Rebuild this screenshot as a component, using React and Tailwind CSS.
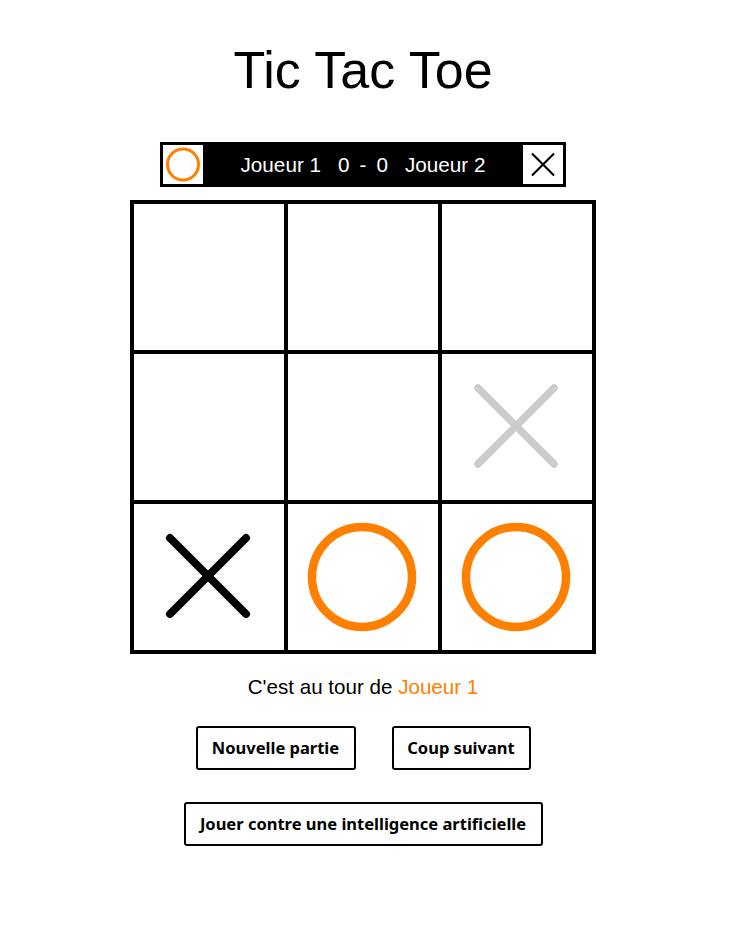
import { useState } from 'react';

const ORANGE = '#ff7f00';

const board = [
  [null, null, null],
  [null, null, 'ghost'],
  ['X', 'O', 'O'],
];

const Cross = ({ color, width = 8 }) => (
  <svg width="150" height="146" viewBox="0 0 150 146">
    <line x1="36" y1="34" x2="112" y2="110" stroke={color} strokeWidth={width} strokeLinecap="round" />
    <line x1="112" y1="34" x2="36" y2="110" stroke={color} strokeWidth={width} strokeLinecap="round" />
  </svg>
);

const Ring = () => (
  <svg width="150" height="146" viewBox="0 0 150 146">
    <circle cx="74" cy="73" r="50" fill="none" stroke={ORANGE} strokeWidth="8.5" />
  </svg>
);

const Cell = ({ value }) => (
  <div className="flex items-center justify-center bg-white">
    {value === 'X' && <Cross color="#000" />}
    {value === 'ghost' && <Cross color="#cccccc" width={7.5} />}
    {value === 'O' && <Ring />}
  </div>
);

const ScoreBar = ({ score }) => (
  <div className="flex h-[45px] w-[406px] items-center bg-black p-[3px]">
    <div className="flex h-[39px] w-[40px] items-center justify-center bg-white">
      <svg width="40" height="39" viewBox="0 0 40 39">
        <circle cx="20" cy="19.5" r="15.5" fill="none" stroke={ORANGE} strokeWidth="3" />
      </svg>
    </div>
    <div className="flex flex-1 items-center justify-center gap-[17px] text-[20.7px] leading-[24px] text-white">
      <span>Joueur 1</span>
      <span className="flex gap-[10px]">
        <span>{score[0]}</span>
        <span>-</span>
        <span>{score[1]}</span>
      </span>
      <span>Joueur 2</span>
    </div>
    <div className="flex h-[39px] w-[40px] items-center justify-center bg-white">
      <svg width="40" height="39" viewBox="0 0 40 39">
        <line x1="9" y1="8.5" x2="31" y2="30.5" stroke="#000" strokeWidth="2.2" />
        <line x1="31" y1="8.5" x2="9" y2="30.5" stroke="#000" strokeWidth="2.2" />
      </svg>
    </div>
  </div>
);

export default function App() {
  const [score] = useState([0, 0]);

  return (
    <div className="min-h-screen bg-white" style={{ fontFamily: '"Liberation Sans", Arial, sans-serif' }}>
      <div className="flex w-[726px] flex-col items-center">
        <h1 className="mt-[40px] text-[52px] font-normal leading-[60px] text-black">Tic Tac Toe</h1>

        <div className="mt-[42px]">
          <ScoreBar score={score} />
        </div>

        {/* plateau */}
        <div className="mt-[13px] grid grid-cols-[150px_150px_150px] grid-rows-[146px_146px_146px] gap-[4px] bg-black p-[4px]">
          {board.flat().map((v, i) => (
            <Cell key={i} value={v} />
          ))}
        </div>

        <p className="mt-[21px] text-[20.6px] leading-[23px] text-black">
          C'est au tour de <span style={{ color: ORANGE }}>Joueur 1</span>
        </p>

        <div
          className="flex flex-col items-center"
          style={{ fontFamily: '"Noto Sans", "Open Sans", sans-serif' }}
        >
          <div className="mt-[28px] flex gap-[36px]">
            <button className="h-[44px] w-[160px] rounded-[3px] border-2 border-black bg-white text-[16.5px] font-bold text-black">
              Nouvelle partie
            </button>
            <button className="h-[44px] w-[139px] rounded-[3px] border-2 border-black bg-white text-[16.5px] font-bold text-black">
              Coup suivant
            </button>
          </div>
          <button className="mt-[32px] h-[44px] w-[359px] rounded-[3px] border-2 border-black bg-white text-[16.5px] font-bold text-black">
            Jouer contre une intelligence artificielle
          </button>
        </div>
      </div>
    </div>
  );
}
